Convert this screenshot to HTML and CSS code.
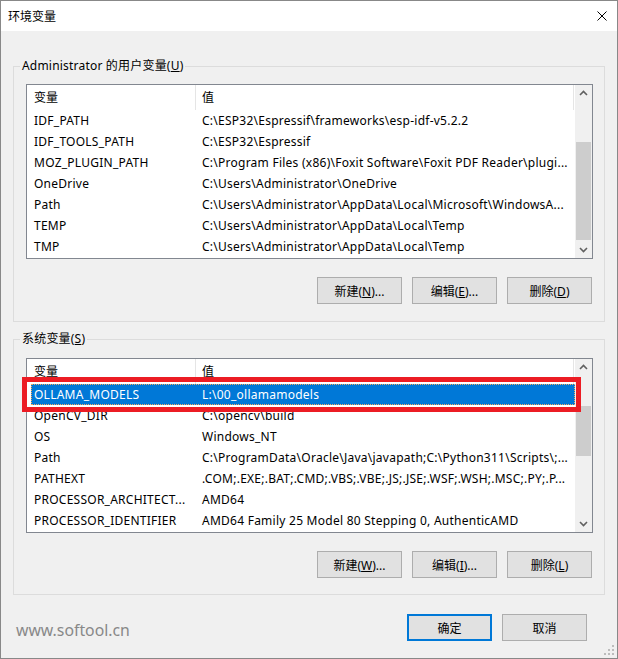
FILE: index.html
```html
<!DOCTYPE html>
<html>
    <head>
        <meta content="text/html;charset=utf-8" http-equiv="Content-Type" />
        <title>环境变量</title>
        <link rel="stylesheet" href="styles.css">
    </head>
    <body>
        <div class="window">
            <div class="titlebar">
                <span class="title">环境变量</span>
                <svg class="close" width="10" height="10" viewBox="0 0 10 10">
                    <path d="M0.5 0.5 L9.5 9.5 M9.5 0.5 L0.5 9.5" stroke="#000" stroke-width="1" fill="none" />
                </svg>
            </div>
            <div class="content">
                <div class="group">
                    <div class="group-label">Administrator 的用户变量(<u>U</u>)</div>
                    <div class="list">
                        <div class="list-main">
                            <div class="list-head">
                                <span class="col-name">变量</span>
                                <span class="col-value">值</span>
                            </div>
                            <div class="row"><span class="col-name">IDF_PATH</span><span class="col-value">C:\ESP32\Espressif\frameworks\esp-idf-v5.2.2</span></div>
                            <div class="row"><span class="col-name">IDF_TOOLS_PATH</span><span class="col-value">C:\ESP32\Espressif</span></div>
                            <div class="row"><span class="col-name">MOZ_PLUGIN_PATH</span><span class="col-value">C:\Program Files (x86)\Foxit Software\Foxit PDF Reader\plugi...</span></div>
                            <div class="row"><span class="col-name">OneDrive</span><span class="col-value">C:\Users\Administrator\OneDrive</span></div>
                            <div class="row"><span class="col-name">Path</span><span class="col-value">C:\Users\Administrator\AppData\Local\Microsoft\WindowsA...</span></div>
                            <div class="row"><span class="col-name">TEMP</span><span class="col-value">C:\Users\Administrator\AppData\Local\Temp</span></div>
                            <div class="row"><span class="col-name">TMP</span><span class="col-value">C:\Users\Administrator\AppData\Local\Temp</span></div>
                        </div>
                        <div class="scrollbar">
                            <div class="arrow">
                                <svg width="17" height="17" viewBox="0 0 17 17"><polyline points="5,10 8.5,6.5 12,10" /></svg>
                            </div>
                            <div class="track"><div class="thumb" style="margin-top: 40px; height: 98px;"></div></div>
                            <div class="arrow">
                                <svg width="17" height="17" viewBox="0 0 17 17"><polyline points="5,7 8.5,10.5 12,7" /></svg>
                            </div>
                        </div>
                    </div>
                    <div class="buttons">
                        <button class="btn">新建(<u>N</u>)...</button>
                        <button class="btn">编辑(<u>E</u>)...</button>
                        <button class="btn">删除(<u>D</u>)</button>
                    </div>
                </div>

                <div class="group group-system">
                    <div class="group-label">系统变量(<u>S</u>)</div>
                    <div class="list">
                        <div class="list-main">
                            <div class="list-head">
                                <span class="col-name">变量</span>
                                <span class="col-value">值</span>
                            </div>
                            <div class="row selected"><span class="col-name">OLLAMA_MODELS</span><span class="col-value">L:\00_ollamamodels</span><span class="mark"></span></div>
                            <div class="row"><span class="col-name">OpenCV_DIR</span><span class="col-value">C:\opencv\build</span></div>
                            <div class="row"><span class="col-name">OS</span><span class="col-value">Windows_NT</span></div>
                            <div class="row"><span class="col-name">Path</span><span class="col-value">C:\ProgramData\Oracle\Java\javapath;C:\Python311\Scripts\;...</span></div>
                            <div class="row"><span class="col-name">PATHEXT</span><span class="col-value">.COM;.EXE;.BAT;.CMD;.VBS;.VBE;.JS;.JSE;.WSF;.WSH;.MSC;.PY;.P...</span></div>
                            <div class="row"><span class="col-name">PROCESSOR_ARCHITECT...</span><span class="col-value">AMD64</span></div>
                            <div class="row"><span class="col-name">PROCESSOR_IDENTIFIER</span><span class="col-value">AMD64 Family 25 Model 80 Stepping 0, AuthenticAMD</span></div>
                        </div>
                        <div class="scrollbar">
                            <div class="arrow">
                                <svg width="17" height="17" viewBox="0 0 17 17"><polyline points="5,10 8.5,6.5 12,10" /></svg>
                            </div>
                            <div class="track"><div class="thumb" style="margin-top: 30px; height: 50px;"></div></div>
                            <div class="arrow">
                                <svg width="17" height="17" viewBox="0 0 17 17"><polyline points="5,7 8.5,10.5 12,7" /></svg>
                            </div>
                        </div>
                    </div>
                    <div class="buttons">
                        <button class="btn">新建(<u>W</u>)...</button>
                        <button class="btn">编辑(<u>I</u>)...</button>
                        <button class="btn">删除(<u>L</u>)</button>
                    </div>
                </div>

                <div class="footer">
                    <span class="watermark">www.softool.cn</span>
                    <button class="btn btn-default">确定</button>
                    <button class="btn">取消</button>
                </div>
            </div>
            <svg class="grip" width="12" height="12" viewBox="0 0 12 12">
                <rect x="9" y="1" width="2" height="2" />
                <rect x="9" y="5" width="2" height="2" />
                <rect x="5" y="5" width="2" height="2" />
                <rect x="9" y="9" width="2" height="2" />
                <rect x="5" y="9" width="2" height="2" />
                <rect x="1" y="9" width="2" height="2" />
            </svg>
        </div>
    </body>
</html>
```

FILE: styles.css
```css
* {
    box-sizing: border-box;
}

body {
    margin: 0;
    font-family: "Noto Sans", "Noto Sans CJK SC", sans-serif;
    font-size: 12px;
    color: #000;
}

.window {
    position: relative;
    width: 618px;
    height: 659px;
    border: 1px solid #888;
    background-color: #f0f0f0;
    display: flex;
    flex-direction: column;
}

.titlebar {
    height: 30px;
    background-color: #fff;
    display: flex;
    align-items: center;
    justify-content: space-between;
    padding: 0 10px 0 7px;
}

.close {
    display: block;
}

.content {
    flex: 1;
    padding: 0 12px;
}

.group {
    margin-top: 35px;
    border: 1px solid #dcdcdc;
    padding: 0 11px 17px 12px;
}

.group-system {
    margin-top: 17px;
    padding-bottom: 16px;
}

.group-label {
    margin: -9px 0 0 -6px;
    padding: 0 2px;
    width: fit-content;
    height: 16px;
    line-height: 16px;
    background-color: #f0f0f0;
    letter-spacing: 0.2px;
}

.list {
    margin-top: 10px;
    height: 175px;
    border: 1px solid #828790;
    background-color: #fff;
    display: flex;
}

.group-system .list {
    margin-top: 11px;
}

.list-main {
    flex: 1;
    min-width: 0;
}

.list-head {
    height: 25px;
    display: flex;
}

.list-head span {
    line-height: 25px;
    border-right: 1px solid #e5e5e5;
}

.list-head .col-name {
    width: 169px;
    padding-left: 7px;
}

.list-head .col-value {
    flex: 1;
    margin-right: 1px;
    padding-left: 6px;
}

.row {
    position: relative;
    height: 21px;
    margin-left: 4px;
    display: flex;
    line-height: 21px;
    white-space: nowrap;
    letter-spacing: 0.25px;
}

.row span {
    overflow: hidden;
}

.row .col-name {
    width: 165px;
    padding-left: 3px;
}

.row .col-value {
    flex: 1;
    padding-left: 6px;
}

.row.selected {
    background-color: #0078d7;
    color: #fff;
    outline: 1px dotted #f5a95e;
    outline-offset: -1px;
}

/* red annotation frame round the selected row */
.row .mark {
    position: absolute;
    top: -7px;
    left: -9px;
    right: -6px;
    bottom: -7px;
    border: 5px solid #ec1c24;
    z-index: 1;
}

.scrollbar {
    width: 17px;
    background-color: #f0f0f0;
    display: flex;
    flex-direction: column;
}

.arrow {
    height: 17px;
}

.arrow svg {
    display: block;
}

.arrow polyline {
    fill: none;
    stroke: #606060;
    stroke-width: 1.6;
}

.track {
    flex: 1;
}

.thumb {
    margin: 0 1px;
    background-color: #cdcdcd;
}

.buttons {
    margin: 18px 1px 0 0;
    display: flex;
    justify-content: flex-end;
    gap: 10px;
}

.btn {
    width: 85px;
    height: 27px;
    padding: 0;
    border: 1px solid #adadad;
    background-color: #e1e1e1;
    font-family: inherit;
    font-size: 12px;
    color: #000;
}

.btn-default {
    border: 2px solid #0078d7;
}

.footer {
    margin-top: 19px;
    padding-right: 18px;
    display: flex;
    align-items: center;
    gap: 10px;
}

.watermark {
    flex: 1;
    margin: 5px 0 0 3px;
    font-size: 15.8px;
    color: #888;
}

.grip {
    position: absolute;
    right: 2px;
    bottom: 2px;
    fill: #bcbcbc;
}
```
